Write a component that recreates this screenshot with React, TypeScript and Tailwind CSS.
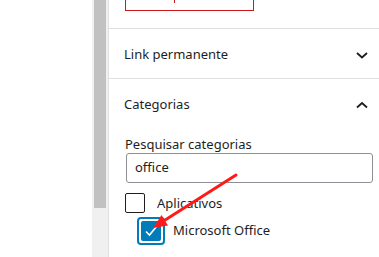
import React from 'react';

const Chevron = ({ up }: { up?: boolean }) => (
  <svg width="24" height="24" viewBox="0 0 24 24" className="shrink-0">
    {up ? (
      <path d="M7 14.5 L12 10 L17 14.5" fill="none" stroke="#1e1e1e" strokeWidth="1.8" />
    ) : (
      <path d="M7 10 L12 14.5 L17 10" fill="none" stroke="#1e1e1e" strokeWidth="1.8" />
    )}
  </svg>
);

export default function App() {
  return (
    <div
      className="relative flex w-[379px] h-[257px] overflow-hidden bg-white text-[13px] text-[#1e1e1e]"
      style={{ fontFamily: '"Noto Sans", "Open Sans", sans-serif' }}
    >
      {/* left blank area */}
      <div className="w-[92px] shrink-0 bg-white" />

      {/* scrollbar */}
      <div className="w-[16px] shrink-0 bg-[#f0f0f0] flex justify-center">
        <div className="w-[12px] h-[208px] bg-[#c1c1c1]" />
      </div>

      {/* sidebar panel */}
      <div className="flex-1 flex flex-col border-l border-[#e0e0e0]">
        {/* cut-off field */}
        <div className="h-[28px] pl-[16px]">
          <div className="relative w-[129px] h-[11px] border-x border-b border-[#cc1818]">
            <div className="absolute left-[48px] top-0 w-px h-[3px] bg-[#cc1818]" />
          </div>
        </div>

        {/* Link permanente */}
        <div className="h-[50px] pt-[2px] border-t border-[#e0e0e0] pl-[15px] pr-[5px] flex items-center justify-between">
          <span>Link permanente</span>
          <Chevron />
        </div>

        {/* Categorias */}
        <div className="border-t border-[#e0e0e0]">
          <div className="h-[49px] pt-[2px] pl-[15px] pr-[5px] flex items-center justify-between">
            <span>Categorias</span>
            <Chevron up />
          </div>

          <div className="pl-[16px] pr-[6px] pt-[8px]">
            <div className="leading-[17px]">Pesquisar categorias</div>
            <div className="ml-px h-[30px] rounded-[3px] border border-[#8c8f94] flex items-center px-[8px]">
              office
            </div>

            <div className="mt-[10px] flex items-center gap-[12px] h-[20px]">
              <div className="w-[20px] h-[20px] rounded-[2px] border border-[#1e1e1e] bg-white" />
              <span className="pt-px">Aplicativos</span>
            </div>

            <div className="mt-[4px] ml-[12px] flex items-center gap-[8px]">
              <div className="w-[28px] h-[28px] rounded-[4px] border-2 border-[#007cba] p-[2px] bg-white">
                <div className="w-full h-full rounded-[2px] bg-[#007cba] flex items-center justify-center">
                  <svg width="16" height="16" viewBox="0 0 16 16">
                    <path d="M3 8.5 L6.5 12 L13.5 3.5" fill="none" stroke="#ffffff" strokeWidth="1.6" />
                  </svg>
                </div>
              </div>
              <span>Microsoft Office</span>
            </div>
          </div>
        </div>
      </div>

      {/* red annotation arrow */}
      <svg className="absolute left-0 top-0 pointer-events-none" width="379" height="257">
        <line x1="236" y1="175" x2="162" y2="222" stroke="#ff1a1a" strokeWidth="3" strokeLinecap="round" />
        <polygon points="153,228 168,225.5 161.5,215" fill="#ff1a1a" />
      </svg>
    </div>
  );
}
